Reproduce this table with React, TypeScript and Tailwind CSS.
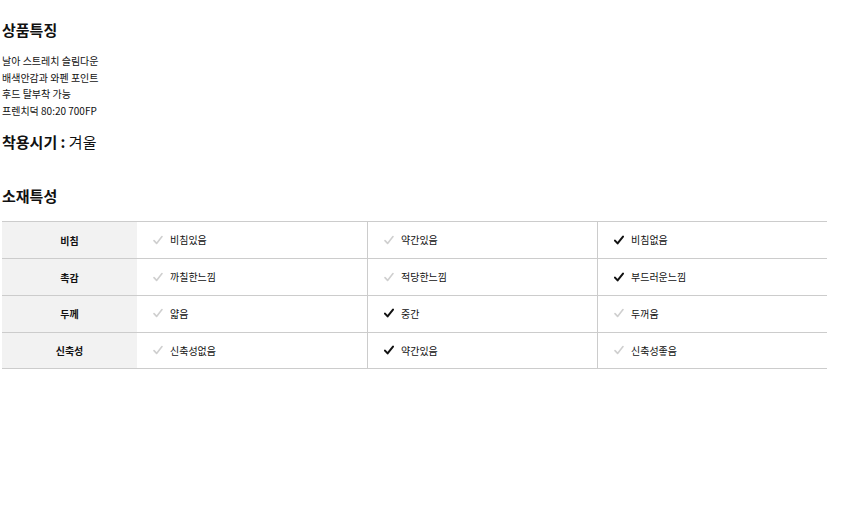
const rows: { label: string; items: { text: string; on: boolean }[] }[] = [
  {
    label: "비침",
    items: [
      { text: "비침있음", on: false },
      { text: "약간있음", on: false },
      { text: "비침없음", on: true },
    ],
  },
  {
    label: "촉감",
    items: [
      { text: "까칠한느낌", on: false },
      { text: "적당한느낌", on: false },
      { text: "부드러운느낌", on: true },
    ],
  },
  {
    label: "두께",
    items: [
      { text: "얇음", on: false },
      { text: "중간", on: true },
      { text: "두꺼움", on: false },
    ],
  },
  {
    label: "신축성",
    items: [
      { text: "신축성없음", on: false },
      { text: "약간있음", on: true },
      { text: "신축성좋음", on: false },
    ],
  },
];

function Check({ on }: { on: boolean }) {
  return (
    <svg width="10" height="10" viewBox="0 0 10 10" className="shrink-0">
      <path
        d="M1 5.6 L3.6 8.4 L9 1.6"
        fill="none"
        stroke={on ? "#111111" : "#cfcfcf"}
        strokeWidth={on ? 2 : 1.6}
        strokeLinecap="round"
        strokeLinejoin="round"
      />
    </svg>
  );
}

export default function App() {
  return (
    <div
      className="min-h-screen bg-white text-[#111] px-[2px] pt-[20px]"
      style={{ fontFamily: '"Noto Sans CJK KR", "Noto Sans", sans-serif' }}
    >
      <h2 className="text-[15px] leading-[20px] font-bold">상품특징</h2>
      <div className="mt-[13px] text-[10px] leading-[16.6px]">
        <p>날아 스트레치 슬림다운</p>
        <p>배색안감과 와펜 포인트</p>
        <p>후드 탈부착 가능</p>
        <p>프렌치덕 80:20 700FP</p>
      </div>
      <p className="mt-[13px] text-[15px] leading-[20px]">
        <span className="font-bold">착용시기 :</span> 겨울
      </p>

      <h2 className="mt-[34px] text-[15px] leading-[20px] font-bold">소재특성</h2>
      <div className="mt-[15px] w-[825px] border-t border-[#cccccc]">
        {rows.map((row) => (
          <div key={row.label} className="flex h-[36.75px] border-b border-[#cccccc] text-[10px]">
            <div className="w-[135px] bg-[#f2f2f2] flex items-center justify-center font-bold">
              {row.label}
            </div>
            {row.items.map((it, i) => (
              <div
                key={i}
                className={
                  "w-[230px] flex items-center gap-[7px] pl-[16px] pb-[1px] " +
                  (i > 0 ? "border-l border-[#cccccc]" : "")
                }
              >
                <Check on={it.on} />
                <span>{it.text}</span>
              </div>
            ))}
          </div>
        ))}
      </div>
    </div>
  );
}
